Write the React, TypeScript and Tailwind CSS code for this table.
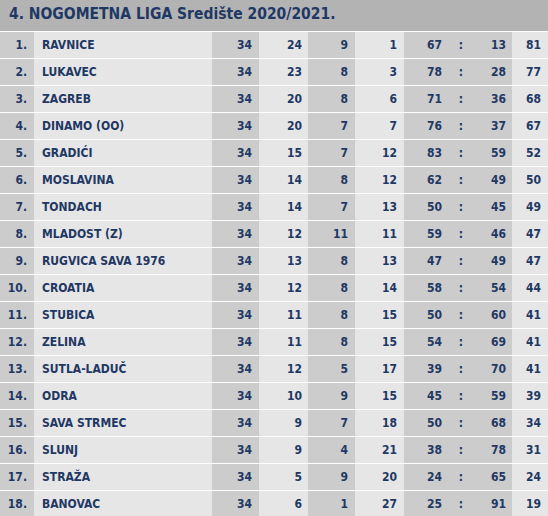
const rows: [string, number, number, number, number, number, number, number][] = [
  ["RAVNICE", 34, 24, 9, 1, 67, 13, 81],
  ["LUKAVEC", 34, 23, 8, 3, 78, 28, 77],
  ["ZAGREB", 34, 20, 8, 6, 71, 36, 68],
  ["DINAMO (OO)", 34, 20, 7, 7, 76, 37, 67],
  ["GRADIĆI", 34, 15, 7, 12, 83, 59, 52],
  ["MOSLAVINA", 34, 14, 8, 12, 62, 49, 50],
  ["TONDACH", 34, 14, 7, 13, 50, 45, 49],
  ["MLADOST (Z)", 34, 12, 11, 11, 59, 46, 47],
  ["RUGVICA SAVA 1976", 34, 13, 8, 13, 47, 49, 47],
  ["CROATIA", 34, 12, 8, 14, 58, 54, 44],
  ["STUBICA", 34, 11, 8, 15, 50, 60, 41],
  ["ZELINA", 34, 11, 8, 15, 54, 69, 41],
  ["SUTLA-LADUČ", 34, 12, 5, 17, 39, 70, 41],
  ["ODRA", 34, 10, 9, 15, 45, 59, 39],
  ["SAVA STRMEC", 34, 9, 7, 18, 50, 68, 34],
  ["SLUNJ", 34, 9, 4, 21, 38, 78, 31],
  ["STRAŽA", 34, 5, 9, 20, 24, 65, 24],
  ["BANOVAC", 34, 6, 1, 27, 25, 91, 19],
];

const dark = "bg-[#cccccc]";
const light = "bg-[#e6e6e6]";

export default function App() {
  return (
    <div className="w-[548px] h-[516px] overflow-hidden bg-white font-['DejaVu_Sans_Condensed','DejaVu_Sans',sans-serif] text-[#1f3864]">
      <div className="flex h-[31px] items-center bg-[#b3b3b3] pb-[2px] pl-[9px] text-[15.5px] font-bold">
        4. NOGOMETNA LIGA Središte 2020/2021.
      </div>
      <div className="flex flex-col gap-px pt-px text-[12px] font-bold">
        {rows.map((r, i) => (
          <div
            key={i}
            className="grid h-[26px] grid-cols-[34px_178px_47px_49px_47px_49px_108px_36px] items-stretch leading-[26px]"
          >
            <div className={`${dark} pr-[7px] text-right`}>{i + 1}.</div>
            <div className={`${light} pl-[8px]`}>{r[0]}</div>
            <div className={`${dark} pr-[7px] text-right`}>{r[1]}</div>
            <div className={`${light} pr-[6px] text-right`}>{r[2]}</div>
            <div className={`${dark} pr-[7px] text-right`}>{r[3]}</div>
            <div className={`${light} pr-[7px] text-right`}>{r[4]}</div>
            <div className={`${dark} grid grid-cols-[38px_38px_32px]`}>
              <div className="text-right">{r[5]}</div>
              <div className="text-center">:</div>
              <div className="pr-[6px] text-right">{r[6]}</div>
            </div>
            <div className={`${light} pr-[7px] text-right`}>{r[7]}</div>
          </div>
        ))}
      </div>
    </div>
  );
}
